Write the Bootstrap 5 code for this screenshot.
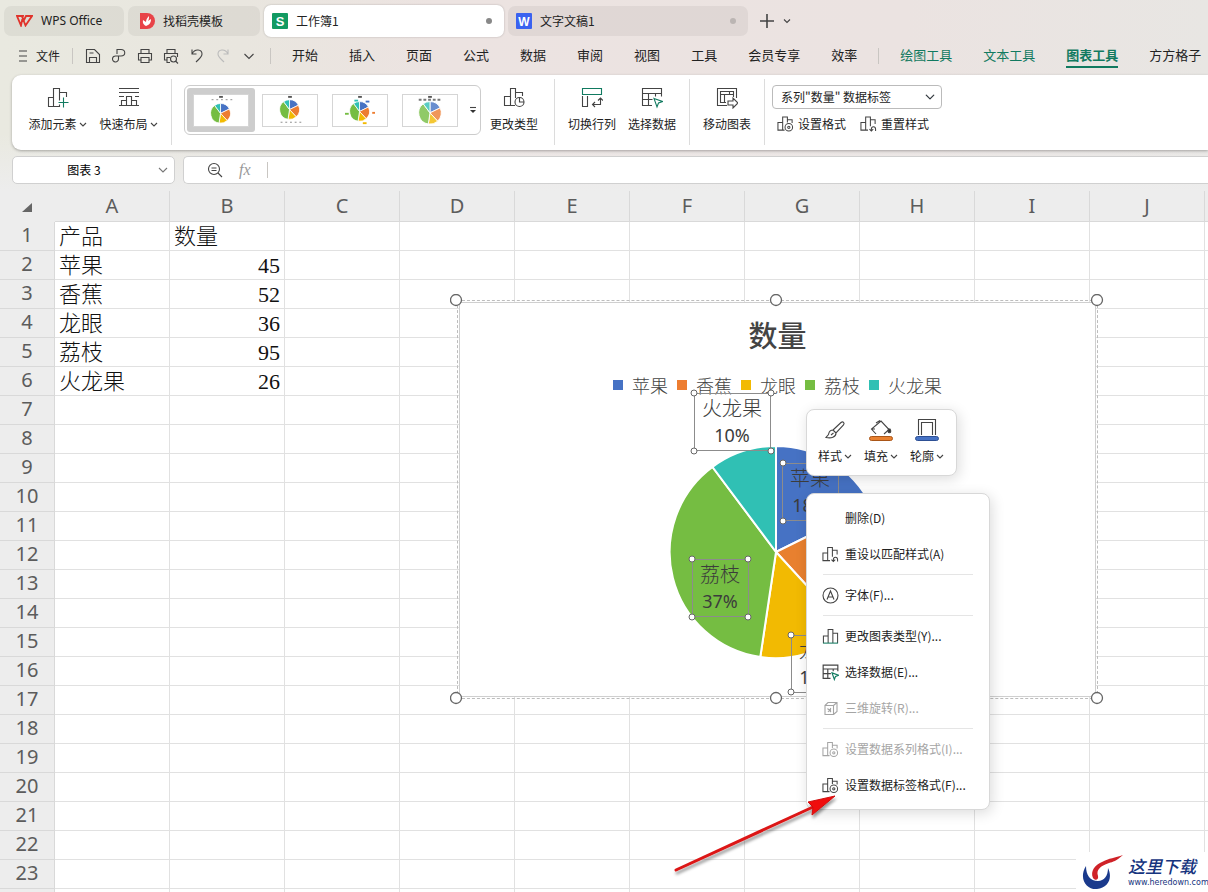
<!DOCTYPE html>
<html lang="zh-CN">
<head>
<meta charset="utf-8">
<meta name="viewport" content="width=device-width, initial-scale=1">
<title>工作簿1 - WPS Office</title>
<link rel="stylesheet" href="https://cdn.jsdelivr.net/npm/bootstrap@5.3.0/dist/css/bootstrap.min.css">
<style>
body{font-family:"Noto Sans CJK SC",sans-serif;font-size:12px;line-height:18px;color:#222;background:#ededed}
.shell{height:100vh}
.topzone{background:linear-gradient(180deg,rgba(237,237,237,0) 70%,#ededed 100%),linear-gradient(90deg,#e9e9e0 0,#e9e6df 20%,#ece3e1 36%,#ebe3e1 75%,#e8e6e3 100%)}
.ic{fill:none;stroke:#444;stroke-width:1.1;flex:none}
.btn{--bs-btn-font-size:12px;--bs-btn-line-height:18px;--bs-btn-color:#222;--bs-btn-padding-x:0;--bs-btn-padding-y:0;--bs-btn-border-width:0;white-space:nowrap}
.tabsrow{height:37px}
.doctab{height:30px;border-radius:7px;background:rgba(0,0,0,.05);padding:0 12px}
.doctab.on{background:#fff;height:32px;box-shadow:0 0 2px rgba(0,0,0,.25);padding:0 8px}
.dt-a{width:120px}.dt-b{width:132px}.dt-c{width:240px}.dt-d{width:240px;padding:0 8px}
.latin{font-family:"Noto Sans",sans-serif}
.dot{width:6px;height:6px;border-radius:50%;background:#888}
.dot.dim{background:#bbb5b3}
.menurow{height:38px;font-size:13px;padding-left:18px}
.menurow .quick{gap:10px;margin:0 13px 0 12px}
.menurow .links{gap:31px;margin:0 21px}
.menurow a{color:#222;text-decoration:none;white-space:nowrap;line-height:22px;border-bottom:2px solid transparent}
.menurow .tool{color:#117a60}
.menurow .tool.on{font-weight:700;border-color:#117a60}
.vbar{width:1px;height:16px;background:#c9c6c2;flex:none}
.ribbon{height:75px;background:#fff;border-radius:9px 0 0 9px;box-shadow:0 1px 3px rgba(0,0,0,.3);margin-left:12px;padding:10px 0 0 10px}
.sep{width:1px;height:66px;background:#dcdcdc;margin:0 7px;flex:none}
.ribbon .sep{margin-top:-6px}
.rb{display:flex;flex-direction:column;align-items:center;gap:6px;width:60px;margin-top:2px;flex:none}
.rb.wide{width:71px}.rb.mid{width:66px}
.gallery{width:297px;height:50px;border:1px solid #ccc;border-radius:6px;padding:2px;margin-left:5px;flex:none}
.thumb{width:70px;height:44px;border-radius:3px;display:flex;align-items:center;justify-content:center}
.thumb.on{background:#cdcdcd;width:68px}
.thumb svg{background:#fff;border:1px solid #d5d5d5}
.target{width:170px;height:24px;border:1px solid #bbb;border-radius:4px;font-size:12px;color:#222;padding:0 8px;line-height:20px;background-color:#fff;background-size:10px 10px;background-position:right 6px center}
.subrow{margin-top:6px;gap:14px;padding-left:5px}
.fbar{height:41px;padding:6px 0 7px 12px;gap:8px}
.namebox{width:163px;border:1px solid #d0d0d0;border-radius:5px;background:#fff}
.namebox input{border:0;width:142px;text-align:center;background:none;outline:0;padding:0}
.formula{border:1px solid #d0d0d0;border-right:0;border-radius:5px 0 0 5px;background:#fff;padding-left:23px}
.formula input{border:0;outline:0}
.fx{font:italic 16px/18px "Liberation Serif",serif;color:#999}
.sheet{background:#fff}
.grid{table-layout:fixed;width:1320px;border-collapse:separate;border-spacing:0}
.grid .rh{width:55px}
.grid th{background:#ededed;font:400 20px/28px "Noto Sans",sans-serif;color:#5c5c5c;text-align:center;border-right:1px solid #d9d9d9;padding:0}
.grid thead th{height:31px;line-height:30px;border-bottom:1px solid #d9d9d9}
.grid thead th:first-child{border-color:#ededed}
.grid tbody th{height:29px;line-height:24px;border-bottom:1px solid #d9d9d9;padding-bottom:3px}
.grid td{border-right:1px solid #e1e1e1;border-bottom:1px solid #e1e1e1;padding:2px 4px 0;font:300 22px/26px "Liberation Serif","Noto Sans CJK SC",serif;color:#111;height:29px;white-space:nowrap}
.grid .num{text-align:right}
.chart{position:absolute;left:450px;top:103px;width:654px;height:412px}
.chartbody{position:absolute;inset:8px 8px 9px 9px;background:#fff;border:1px solid #cfcfcf;outline:1px dashed #bdbdbd;outline-offset:1px}
.chartbody h2{font:500 29px/38px "Noto Sans CJK SC",serif;color:#444;margin:12px 0 0}
.legend{font:300 18px/24px "Noto Sans CJK SC",serif;color:#444;margin-top:20px;gap:9px}
.sw{width:10px;height:10px;display:block}
.layer{position:absolute;left:0;top:0}
.lab{font:300 20px "Noto Sans CJK SC",serif;fill:#3c3c3c;text-anchor:middle}
.pct{font:400 18px "Noto Sans",sans-serif;fill:#3c3c3c;text-anchor:middle}
.pop{position:absolute;background:#fff;border:1px solid #d8d8d8;border-radius:8px;box-shadow:2px 3px 14px rgba(0,0,0,.14)}
.mini{left:806px;top:218px;width:151px;height:67px;padding:8px 5px 0}
.mini .btn{width:46px;display:flex;flex-direction:column;align-items:center;gap:5px}
.ctx{left:806px;top:302px;width:184px;padding:6px 0;display:block;min-width:0;font-size:12px;color:#222}
.ctx .dropdown-item{height:36px;padding:0 15px;display:flex;align-items:center;gap:6px;font-size:12px;color:#222}
.ctx .dropdown-item:disabled{color:#a5a5a5}
.ctx .dropdown-item:disabled .ic{stroke:#a5a5a5}
.ctx hr{margin:2px 16px;border-color:#999}
.noicon{width:17px}
.arrow{position:absolute;left:665px;top:595px;z-index:1001}
.wm{position:absolute;right:0;bottom:0;background:#fff;width:132px;height:40px;padding:3px 0 0 6px}
.wm b{font:italic 500 17px/22px "Noto Sans CJK SC",serif;color:#16347e;white-space:nowrap}
.wm a{font:8px/12px "DejaVu Sans",sans-serif;color:#16347e;text-decoration:none}
</style>
</head>
<body>
<svg width="0" height="0" class="position-absolute" aria-hidden="true">
 <defs>
  <symbol id="chev" viewBox="0 0 10 10"><path d="m2 3.500 3 3 3-3"/></symbol>
  <symbol id="chart-add" viewBox="0 0 22 22"><path d="M1.500 10.500h5v9h-5zM6.500 19.500V1.500h6v18h-6M12.500 5.500h7V10"/><path d="M9.500 15.500h12M16.500 10v11" stroke="#fff" stroke-width="4"/><path d="M11.500 15.500h10M16.500 10.500v10" stroke="#117a60"/></symbol>
  <symbol id="layout" viewBox="0 0 22 22"><path d="M1 1.500h20M1 5.500h20M1 9.500h5M17 9.500h4M3.500 18.500v-5h5v5zM8.500 18.500v-9h5v9M13.500 13.500h5v5M1 18.500h20"/></symbol>
  <symbol id="chart-type" viewBox="0 0 22 22"><path d="M1.500 9.500h6v9h-6zM12 18.500H7.500v-17h5V11M12.500 5.500h7V9"/><circle cx="16.500" cy="15" r="4.500"/><path d="M16.500 10.500V15H21"/></symbol>
  <symbol id="swap" viewBox="0 0 22 22"><path d="M1.500 1.500h19v6h-19z" stroke="#117a60"/><path d="M1.500 9v10.500h5V9M11.500 17.500h8V11M14 15l-2.500 2.500L14 20M17 13.500l2.500-2.500 2.500 2.500"/></symbol>
  <symbol id="move" viewBox="0 0 22 22"><path d="M11 18.500H1.500v-17h19V11M10 15.500H4.500v-11h13v3h-13M8.500 7.500v8M17.500 7.500V10M13.500 4.500v3"/><path d="M12 14h5v-3l5 5-5 5v-3h-5z" fill="#fff"/></symbol>
  <symbol id="cog-chart" viewBox="0 0 18 18"><path d="M1 7.500h5v8H1zM8 15.500H6v-14h5v6M11 4.500h5V8"/><circle cx="12.500" cy="12.500" r="4"/><circle cx="12.500" cy="12.500" r="1.200"/></symbol>
  <symbol id="undo-chart" viewBox="0 0 18 18"><path d="M1 7.500h5v8H1zM8.500 15.500H6v-14h5v10M11 4.500h5V9M12 16.500v-2c0-3.500 4.500-3.500 4.500 0v2M10 14.500l2 2 2-2"/></symbol>
  <symbol id="bars" viewBox="0 0 18 18"><path d="M1.500 16V8.500h5V16M6.500 9V1.500h5V16M11.500 5.500h5V16"/><path d="M1 16h16" stroke="#117a60"/></symbol>
  <symbol id="select-data" viewBox="0 0 22 22"><path d="M11 18.500H1.500v-17h19v8M1.500 6.500h19M1.500 12.500h10M7.500 6.500v12M14.500 6.500v3"/><path d="m13 11.500 8.500 3-4 1.500-1.500 4z" stroke="#117a60"/></symbol>
  <symbol id="pie-mini" viewBox="-10 -10 20 20"><g stroke="#fff" stroke-width=".8"><path d="M0 0V-10A10 10 0 0 1 9-4.400z" fill="#4672c4"/><path d="M0 0 9-4.400A10 10 0 0 1 6.800 7.400z" fill="#ed7d31"/><path d="M0 0 6.800 7.400A10 10 0 0 1-1.500 9.900z" fill="#f2ba02"/><path d="M0 0-1.500 9.900A10 10 0 0 1-6-8z" fill="#75bd42"/><path d="M0 0-6-8A10 10 0 0 1 0-10z" fill="#30c0b4"/></g></symbol>
  <filter id="soft" x="-10%" y="-10%" width="120%" height="130%"><feDropShadow dx="1" dy="3" stdDeviation="1.500" flood-opacity=".4"/></filter>
 </defs>
</svg>
<div class="shell d-flex flex-column overflow-hidden">
<header class="topzone flex-shrink-0">
 <nav class="tabsrow d-flex align-items-center gap-1 px-1 pt-1" aria-label="文档标签">
  <button class="btn doctab dt-a d-flex align-items-center gap-2"><svg class="ic" width="17" height="12" viewBox="0 0 17 12"><path d="M1 1h6L5 10.500zM6 1.500l3.500 9L16 1h-6L7 7" stroke="#e0342c" stroke-width="1.800"/></svg><span class="latin">WPS Office</span></button>
  <button class="btn doctab dt-b d-flex align-items-center gap-2"><svg width="15" height="16" viewBox="0 0 15 16"><path d="M0 0h7a8 8 0 0 1 0 16H0z" fill="#e84348"/><path d="M6 13C2 11 3 8 3 7l3 2c0-2 1-4 3-6 0 2 0 3-1 5l3-2c0 4-2 6-5 7z" fill="#fff"/></svg>找稻壳模板</button>
  <button class="btn doctab on dt-c d-flex align-items-center gap-2"><svg width="16" height="16"><rect width="16" height="16" rx="1" fill="#129a62"/><text x="8" y="12.500" text-anchor="middle" fill="#fff" font-family="Liberation Sans" font-weight="700" font-size="13">S</text></svg><span class="flex-grow-1 text-start">工作簿1</span><span class="dot me-1"></span></button>
  <button class="btn doctab dt-d d-flex align-items-center gap-2"><svg width="16" height="16"><rect width="16" height="16" rx="1" fill="#3a62f0"/><text x="8" y="12.500" text-anchor="middle" fill="#fff" font-family="Liberation Sans" font-weight="700" font-size="12">W</text></svg><span class="flex-grow-1 text-start">文字文稿1</span><span class="dot dim me-1"></span></button>
  <button class="btn d-flex ms-2 me-1" aria-label="新建"><svg class="ic" width="14" height="14" viewBox="0 0 14 14"><path d="M7 0v14M0 7h14" stroke-width="1.600"/></svg></button>
  <button class="btn d-flex" aria-label="更多标签"><svg class="ic" width="10" height="10"><use href="#chev"/></svg></button>
 </nav>
 <nav class="menurow d-flex align-items-center" aria-label="菜单">
  <button class="btn d-flex align-items-center gap-2 me-2"><svg class="ic" width="10" height="12" viewBox="0 0 10 12"><path d="M1 1h8M1 6h8M1 11h8"/></svg>文件</button>
  <span class="vbar ms-1"></span>
  <div class="quick d-flex align-items-center">
   <button class="btn d-flex" aria-label="保存"><svg class="ic" width="16" height="16" viewBox="0 0 16 16"><path d="M1.500 14.500v-13h8l5 5v8zM4.500 14V9.500h7V14M4.500 5h4"/></svg></button>
   <button class="btn d-flex" aria-label="输出为PDF"><svg class="ic" width="16" height="16" viewBox="0 0 16 16"><path d="M6 6V1.500h4c5 0 5 6.500 0 6.500H5a3 3 0 1 0 2.500 3V8"/></svg></button>
   <button class="btn d-flex" aria-label="打印"><svg class="ic" width="16" height="16" viewBox="0 0 16 16"><path d="M4 5V1.500h8V5M4 12H1.500V5.500h13V12H12M4 9.500h8v5H4z"/></svg></button>
   <button class="btn d-flex" aria-label="打印预览"><svg class="ic" width="16" height="16" viewBox="0 0 16 16"><path d="M4 5V1.500h8V5M4 12H1.500V5.500h13V9M7 14.500H4v-5h3"/><circle cx="10.500" cy="11" r="3"/><path d="m12.500 13 2.500 2.500"/></svg></button>
   <button class="btn d-flex" aria-label="撤销"><svg class="ic" width="16" height="16" viewBox="0 0 16 16"><path d="M3 1.500v4.500h4.500M3 6c3-6 10-4.500 10 0 0 3-3 5-6 8"/></svg></button>
   <button class="btn d-flex" aria-label="恢复"><svg class="ic" width="16" height="16" viewBox="0 0 16 16" style="stroke:#bbb"><path d="M13 1.500v4.500H8.500M13 6C10 0 3 1.500 3 6c0 3 3 5 6 8"/></svg></button>
   <button class="btn d-flex" aria-label="更多"><svg class="ic" width="16" height="16" viewBox="0 0 16 16"><path d="m3.500 6 4.500 4.500L12.500 6"/></svg></button>
  </div>
  <span class="vbar"></span>
  <div class="links d-flex">
   <a href="#">开始</a><a href="#">插入</a><a href="#">页面</a><a href="#">公式</a><a href="#">数据</a><a href="#">审阅</a><a href="#">视图</a><a href="#">工具</a><a href="#">会员专享</a><a href="#">效率</a>
  </div>
  <span class="vbar"></span>
  <div class="links d-flex"><a class="tool" href="#">绘图工具</a><a class="tool" href="#">文本工具</a><a class="tool on" href="#">图表工具</a><a href="#">方方格子</a></div>
 </nav>
 <div class="ribbon d-flex align-items-start">
  <button class="btn rb wide"><svg class="ic" width="22" height="22"><use href="#chart-add"/></svg><span class="d-flex align-items-center">添加元素<svg class="ic" width="10" height="10" viewBox="0 0 10 10"><path d="m3 4 3 3 3-3"/></svg></span></button>
  <button class="btn rb wide"><svg class="ic" width="22" height="22"><use href="#layout"/></svg><span class="d-flex align-items-center">快速布局<svg class="ic" width="10" height="10" viewBox="0 0 10 10"><path d="m3 4 3 3 3-3"/></svg></span></button>
  <span class="sep"></span>
  <div class="gallery d-flex">
   <button class="btn thumb on" aria-label="样式 1"><svg width="56" height="33" viewBox="0 0 56 33"><path d="M26 2h4" stroke="#555" stroke-width="2"/><path d="M18 5h22" stroke="#888" stroke-dasharray="2 3"/><use href="#pie-mini" x="17" y="9" width="21" height="21"/></svg></button>
   <button class="btn thumb" aria-label="样式 2"><svg width="56" height="33" viewBox="0 0 56 33"><path d="M26 2h4" stroke="#555" stroke-width="2"/><path d="M18 29h22" stroke="#888" stroke-dasharray="2 3"/><use href="#pie-mini" x="17" y="5" width="21" height="21"/></svg></button>
   <button class="btn thumb" aria-label="样式 3"><svg width="56" height="33" viewBox="0 0 56 33"><path d="M26 2h4" stroke="#555" stroke-width="2"/><path d="M22 6h4" stroke="#30c0b4" stroke-width="2"/><path d="M34 7h4" stroke="#4672c4" stroke-width="2"/><path d="M41 19h3" stroke="#ed7d31" stroke-width="2"/><path d="M31 30h4" stroke="#f2ba02" stroke-width="2"/><path d="M12 20h4" stroke="#75bd42" stroke-width="2"/><use href="#pie-mini" x="17" y="7" width="21" height="21"/></svg></button>
   <button class="btn thumb" aria-label="样式 4"><svg width="56" height="33" viewBox="0 0 56 33"><path d="M26 2h4" stroke="#555" stroke-width="2"/><path d="M16 5h24" stroke="#777" stroke-width="2" stroke-dasharray="3 2"/><use href="#pie-mini" x="16" y="7" width="24" height="24" opacity=".8"/></svg></button>
   <button class="btn d-flex align-items-center ms-1" aria-label="展开样式"><svg class="ic" width="8" height="8" viewBox="0 0 8 8"><path d="M1 1.500h6"/><path d="M1 4h6L4 7z" fill="#333" stroke="none"/></svg></button>
  </div>
  <button class="btn rb mid"><svg class="ic" width="22" height="22"><use href="#chart-type"/></svg>更改类型</button>
  <span class="sep"></span>
  <button class="btn rb"><svg class="ic" width="22" height="22"><use href="#swap"/></svg>切换行列</button>
  <button class="btn rb"><svg class="ic" width="22" height="22"><use href="#select-data"/></svg>选择数据</button>
  <span class="sep"></span>
  <button class="btn rb"><svg class="ic" width="22" height="22"><use href="#move"/></svg>移动图表</button>
  <span class="sep"></span>
  <div>
   <select class="form-select target" aria-label="图表元素"><option>系列"数量" 数据标签</option></select>
   <div class="subrow d-flex">
    <button class="btn d-flex align-items-center gap-1"><svg class="ic" width="17" height="18"><use href="#cog-chart"/></svg>设置格式</button>
    <button class="btn d-flex align-items-center gap-1"><svg class="ic" width="17" height="18"><use href="#undo-chart"/></svg>重置样式</button>
   </div>
  </div>
 </div>
 <div class="fbar d-flex">
  <div class="namebox d-flex align-items-center"><input aria-label="名称框" value="图表 3"><svg class="ic" width="16" height="16" viewBox="0 0 16 16" style="stroke:#777"><path d="m4 6 4 4 4-4"/></svg></div>
  <div class="formula d-flex align-items-center flex-grow-1">
   <button class="btn d-flex" aria-label="浏览公式结果"><svg class="ic" width="16" height="16" viewBox="0 0 16 16"><circle cx="7" cy="7" r="5.500"/><path d="m11 11 4 4M4.500 6h5M4.500 8.500h5"/></svg></button>
   <button class="btn fx mx-3" aria-label="插入函数">fx</button><span class="vbar"></span>
   <input class="flex-grow-1" aria-label="编辑栏">
  </div>
 </div>
</header>
<main class="sheet position-relative flex-grow-1 overflow-hidden">
 <table class="grid">
  <thead><tr><th class="rh" aria-label="全选"><svg width="10" height="9"><path d="M10 0v9H0z" fill="#666"/></svg></th><th>A</th><th>B</th><th>C</th><th>D</th><th>E</th><th>F</th><th>G</th><th>H</th><th>I</th><th>J</th><th></th></tr></thead>
  <tbody id="rows">
   <tr><th>1</th><td>产品</td><td>数量</td></tr>
   <tr><th>2</th><td>苹果</td><td class="num">45</td></tr>
   <tr><th>3</th><td>香蕉</td><td class="num">52</td></tr>
   <tr><th>4</th><td>龙眼</td><td class="num">36</td></tr>
   <tr><th>5</th><td>荔枝</td><td class="num">95</td></tr>
   <tr><th>6</th><td>火龙果</td><td class="num">26</td></tr>
  </tbody>
 </table>
 <section class="chart" aria-label="图表 3">
  <div class="chartbody text-center">
   <h2>数量</h2>
   <div class="legend d-flex justify-content-center align-items-center">
    <i class="sw" style="background:#4672c4"></i>苹果<i class="sw" style="background:#ed7d31"></i>香蕉<i class="sw" style="background:#f2ba02"></i>龙眼<i class="sw" style="background:#75bd42"></i>荔枝<i class="sw" style="background:#30c0b4"></i>火龙果
   </div>
  </div>
  <svg class="layer" width="654" height="412" viewBox="0 0 654 412">
   <g stroke="#fff" stroke-width="2">
    <path d="M326 258V152A106 106 0 0 1 421 211z" fill="#4672c4"/>
    <path d="M326 258 421 211A106 106 0 0 1 397.500 336z" fill="#e8802f"/>
    <path d="M326 258 397.500 336A106 106 0 0 1 310.300 363z" fill="#f2ba02"/>
    <path d="M326 258 310.300 363A106 106 0 0 1 262.500 173z" fill="#75bd42"/>
    <path d="M326 258 262.500 173A106 106 0 0 1 326 152z" fill="#30c0b4"/>
   </g>
   <g fill="none" stroke="#8c8c8c"><path d="M244.500 99.500h76v57h-76zM332.500 169.500h56v57h-56zM242.500 265.500h56v57h-56zM341.500 341.500h56v57h-56z"/></g>
   <text class="lab" x="282" y="122">火龙果</text><text class="pct" x="282" y="148">10%</text>
   <text class="lab" x="360" y="192">苹果</text><text class="pct" x="360" y="218">18%</text>
   <text class="lab" x="270" y="288">荔枝</text><text class="pct" x="270" y="314">37%</text>
   <text class="lab" x="369" y="364">龙眼</text><text class="pct" x="367" y="390">14%</text>
   <g fill="#fff" stroke="#666">
    <circle cx="244" cy="99" r="3"/><circle cx="321" cy="99" r="3"/><circle cx="244" cy="157" r="3"/><circle cx="321" cy="157" r="3"/>
    <circle cx="333" cy="169" r="3"/><circle cx="333" cy="227" r="3"/>
    <circle cx="242" cy="265" r="3"/><circle cx="298" cy="265" r="3"/><circle cx="242" cy="323" r="3"/><circle cx="298" cy="323" r="3"/>
    <circle cx="341" cy="341" r="3"/><circle cx="341" cy="398" r="3"/>
    <g stroke-width="1.300"><circle cx="6" cy="6" r="5.500"/><circle cx="326" cy="6" r="5.500"/><circle cx="647" cy="6" r="5.500"/><circle cx="6" cy="404" r="5.500"/><circle cx="326" cy="404" r="5.500"/><circle cx="647" cy="404" r="5.500"/></g>
   </g>
  </svg>
 </section>
 <div class="pop mini d-flex" role="toolbar" aria-label="图表格式">
  <button class="btn"><svg class="ic" width="24" height="24" viewBox="0 0 24 24"><path d="m10 12 8-7.500c2-1.500 4 .5 2.500 2.500L13 15zM10 12l3 3M10 12c-4 0-4 3-4.500 4.500L3 19.500c5 1 10 0 10-4.500M8 17l2.500-2"/></svg><span class="d-flex align-items-center">样式<svg class="ic" width="10" height="10" viewBox="0 0 10 10"><path d="m3 4 3 3 3-3"/></svg></span></button>
  <button class="btn"><svg class="ic" width="24" height="24" viewBox="0 0 24 24"><path d="m7 16-4.500-5L12 3l8 8.500-5 4.500M7 5l4-2.500M2.500 11H6"/><path d="M21 11c3 5-4 5-1.500 0z" fill="#333"/><rect x=".5" y="18.500" width="23" height="4" rx="2" fill="#e8802f" stroke="#a95517" stroke-width="1"/></svg><span class="d-flex align-items-center">填充<svg class="ic" width="10" height="10" viewBox="0 0 10 10"><path d="m3 4 3 3 3-3"/></svg></span></button>
  <button class="btn"><svg class="ic" width="24" height="24" viewBox="0 0 24 24"><path d="M3.500 17V1.500h17V17M6.500 17V4.500h11V17"/><rect x=".5" y="18.500" width="23" height="4" rx="2" fill="#4672c4" stroke="#2d4f94" stroke-width="1"/></svg><span class="d-flex align-items-center">轮廓<svg class="ic" width="10" height="10" viewBox="0 0 10 10"><path d="m3 4 3 3 3-3"/></svg></span></button>
 </div>
 <div class="pop ctx dropdown-menu show">
  <button class="dropdown-item"><span class="noicon"></span>删除(D)</button>
  <button class="dropdown-item"><svg class="ic" width="17" height="17"><use href="#undo-chart"/></svg>重设以匹配样式(A)</button>
  <hr>
  <button class="dropdown-item"><svg class="ic" width="17" height="17" viewBox="0 0 17 17"><circle cx="8.500" cy="8.500" r="7.500"/><path d="m5 12.500 3.500-8.500 3.500 8.500M6.200 10h4.600"/></svg>字体(F)...</button>
  <hr>
  <button class="dropdown-item"><svg class="ic" width="17" height="17"><use href="#bars"/></svg>更改图表类型(Y)...</button>
  <button class="dropdown-item"><svg class="ic" width="17" height="17" style="stroke-width:1.5"><use href="#select-data"/></svg>选择数据(E)...</button>
  <button class="dropdown-item" disabled><svg class="ic" width="17" height="17" viewBox="0 0 17 17"><path d="M3 5.500h8.500v9H3zM3 5.500l3-3h9v9l-3.500 3M11.500 5.500l3.500-3M5.500 8.500 9 12M9 8l-3 4M8.500 8v3"/></svg>三维旋转(R)...</button>
  <hr>
  <button class="dropdown-item" disabled><svg class="ic" width="17" height="17"><use href="#cog-chart"/></svg>设置数据系列格式(I)...</button>
  <button class="dropdown-item"><svg class="ic" width="17" height="17"><use href="#cog-chart"/></svg>设置数据标签格式(F)...</button>
 </div>
 <svg class="arrow" width="180" height="95" viewBox="0 0 180 95"><g filter="url(#soft)"><path d="M11 84 148 21" stroke="#dc1414" stroke-width="3" stroke-linecap="round"/><path d="m170 10-27 6 5 5-1 8z" fill="#f01010" stroke="#d01010"/></g></svg>
 <div class="wm d-flex gap-1">
  <svg class="flex-shrink-0" width="42" height="36" viewBox="0 0 42 36"><path d="M4 11C-4 24 5 35 15 34 26 33 31 23 26 13c0 8-4 13-10 13C8 26 4 20 4 11z" fill="#1a3a8c"/><path d="M11 23c-3-7 2-13 9-16C27 3 33 3 41 0 34 6 31 7 27 8 18 11 14 15 16 21c1 4-3 5-5 2z" fill="#cf2228"/></svg>
  <div class="d-flex flex-column"><b>这里下载</b><a href="#">www.heredown.com</a></div>
 </div>
</main>
</div>
<script>
// Fill the sheet out to 11 columns; the last, partly visible row stays unnumbered.
const rows = document.getElementById('rows');
for (let r = 0; r < 24; r++) {
  const tr = rows.rows[r] || rows.insertRow();
  if (!tr.cells.length) {
    const th = document.createElement('th');
    th.textContent = r < 23 ? r + 1 : '';
    tr.append(th);
  }
  while (tr.cells.length < 12) tr.insertCell();
}
</script>
<script src="https://cdn.jsdelivr.net/npm/bootstrap@5.3.0/dist/js/bootstrap.bundle.min.js"></script>
</body>
</html>
